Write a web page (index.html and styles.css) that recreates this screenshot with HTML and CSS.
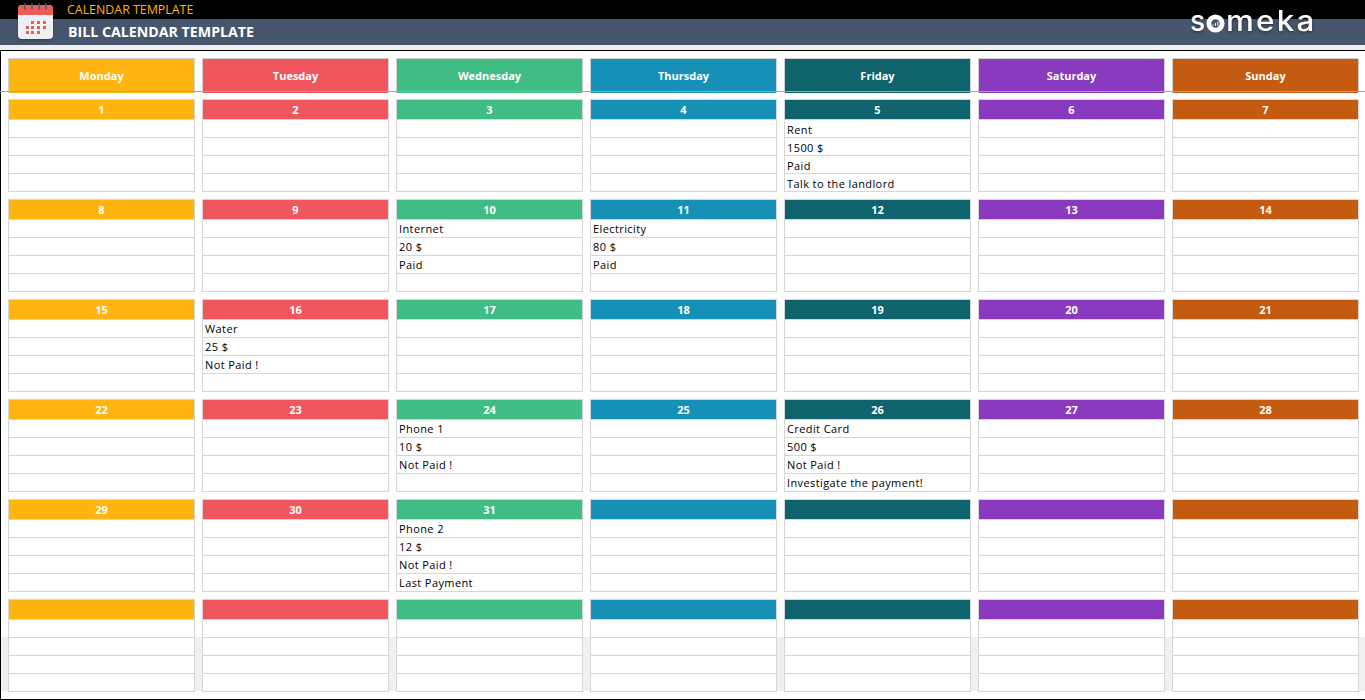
FILE: index.html
```html
<!DOCTYPE html>
<html lang="en">
<head>
<meta charset="utf-8">
<title>Bill Calendar Template</title>
<link rel="stylesheet" href="styles.css">
</head>
<body>
<header class="banner">
  <div class="banner-top"><span class="subtitle">CALENDAR TEMPLATE</span></div>
  <div class="banner-main"><span class="title">BILL CALENDAR TEMPLATE</span></div>
  <svg class="app-icon" viewBox="0 0 36 37" width="36" height="37">
    <rect x="0" y="2" width="35" height="34" rx="4" fill="#eef1f4"/>
    <path d="M0 12V6a4 4 0 0 1 4-4h27a4 4 0 0 1 4 4v6z" fill="#ea5d55"/>
    <g stroke="#4a5568" stroke-width="1.4" stroke-linecap="round"><path d="M7 0v6M14 0v6M21 0v6M28 0v6"/></g>
    <g fill="#ea5d55"><rect x="13" y="18" width="3" height="3"/><rect x="19" y="18" width="3" height="3"/><rect x="25" y="18" width="3" height="3"/><rect x="8" y="23" width="3" height="3"/><rect x="13" y="23" width="3" height="3"/><rect x="19" y="23" width="3" height="3"/><rect x="25" y="23" width="3" height="3"/><rect x="8" y="28" width="3" height="3"/><rect x="13" y="28" width="3" height="3"/><rect x="19" y="28" width="3" height="3"/></g>
  </svg>
  <div class="logo"><span>s</span><svg class="logo-o" viewBox="0 0 20 20" width="19" height="19"><circle cx="10" cy="10" r="9.500" fill="#fff"/><circle cx="10" cy="10" r="4.500" fill="#46566c"/><path d="M7.500 11v1.500M10 9.500v3M12.500 8v4.500" stroke="#fff" stroke-width="1"/></svg><span class="logo-rest">meka</span></div>
</header>
<div class="strip"></div>
<main class="sheet">
  <div class="band"></div>
  <div class="days">
    <div class="day c1">Monday</div><div class="day c2">Tuesday</div><div class="day c3">Wednesday</div><div class="day c4">Thursday</div><div class="day c5">Friday</div><div class="day c6">Saturday</div><div class="day c7">Sunday</div>
  </div>
  <div class="weeks" id="weeks"></div>
</main>
<script>
var notes = {5:["Rent","1500 $","Paid","Talk to the landlord"],10:["Internet","20 $","Paid"],11:["Electricity","80 $","Paid"],16:["Water","25 $","Not Paid !"],24:["Phone 1","10 $","Not Paid !"],26:["Credit Card","500 $","Not Paid !","Investigate the payment!"],31:["Phone 2","12 $","Not Paid !","Last Payment"]};
var html = "";
for (var i = 0; i < 42; i++) {
  var d = i + 1, n = notes[d] || [];
  html += '<section class="cell"><div class="num c' + (i % 7 + 1) + '">' + (d <= 31 ? d : "") + '</div>';
  for (var r = 0; r < 4; r++) html += '<div class="row">' + (n[r] || "") + '</div>';
  html += '</section>';
}
document.getElementById("weeks").innerHTML = html;
</script>
</body>
</html>
```
FILE: styles.css
```css
* { box-sizing: border-box; }
html, body { margin: 0; height: 700px; overflow: hidden; background: #fff; }
body { font-family: "Open Sans", sans-serif; position: relative; }
.banner { position: relative; height: 45px; }
.banner-top { height: 19px; background: #000; padding-left: 67px; }
.subtitle { font-size: 12.4px; line-height: 19px; color: #ffb10f; display: block; }
.banner-main { height: 26px; background: #46566c; padding-left: 68px; }
.title { font-size: 14.2px; font-weight: 700; line-height: 26px; color: #fff; display: block; }
.app-icon { position: absolute; left: 18px; top: 3px; filter: drop-shadow(0 1px 1px rgba(0,0,0,.3)); }
.logo { position: absolute; left: 1190px; top: 4px; display: flex; align-items: center; height: 34px; color: #fff; font-family: "Inter", sans-serif; font-weight: 500; font-size: 28px; line-height: 34px; text-shadow: 0 1px 3px rgba(0,0,0,.5); }
.logo-o { margin: 4px 1px 0; }
.logo-rest { display: inline-block; letter-spacing: 2px; transform: scaleX(1.12); transform-origin: left center; }
.strip { height: 5px; background: #f0f0f0; }
.sheet { position: relative; height: 650px; border-top: 1px solid #000; border-left: 1px solid #000; border-bottom: 1px solid #000; padding: 7px 6px 0 7px; }
.band { position: absolute; left: 0; right: 0; top: 586px; height: 54px; background: #f0f0f0; }
.days, .weeks { position: relative; display: grid; grid-template-columns: repeat(7, 187px); column-gap: 7px; }
.days { height: 34px; }
.days::after { content: ""; position: absolute; left: -8px; width: 1365px; bottom: 0; height: 1px; background: #a6a6a6; }
.day { border: 1px solid #d0d0d0; border-bottom: 0; color: #fff; font-size: 11px; font-weight: 700; text-align: center; line-height: 34px; }
.weeks { margin-top: 7px; row-gap: 7px; }
.cell { height: 93px; border: 1px solid #d6d6d6; background: #fff; }
.num { height: 19px; color: #fff; font-size: 11px; font-weight: 700; text-align: center; line-height: 20px; }
.row { height: 18px; border-top: 1px solid #d6d6d6; padding-left: 2px; font-size: 11px; letter-spacing: .4px; line-height: 18px; color: #000; white-space: nowrap; }
.cell:nth-child(-n+7) .row { line-height: 20px; }
.c1 { background: #ffb40f; }
.c2 { background: #ef565e; }
.c3 { background: #3fbd85; }
.c4 { background: #1790b8; }
.c5 { background: #0e636d; }
.c6 { background: #8a3abf; }
.c7 { background: #c55a11; }
```
